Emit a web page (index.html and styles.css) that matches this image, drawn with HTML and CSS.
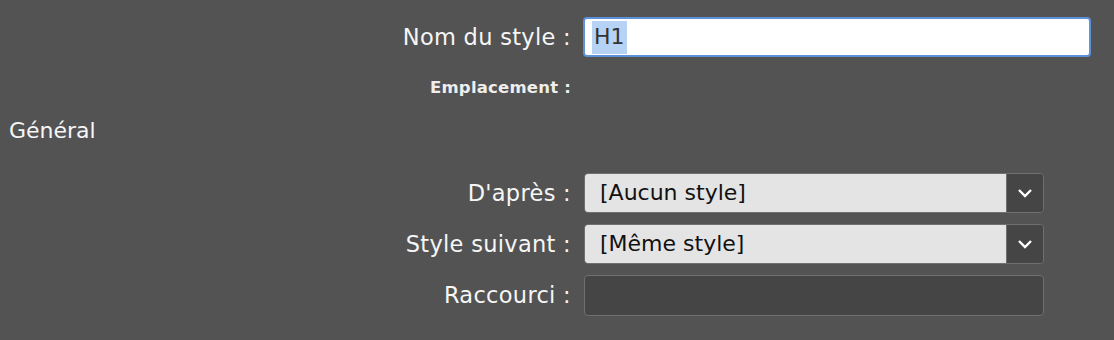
FILE: index.html
```html
<!doctype html>
<html lang="fr">
<head>
	<meta charset="UTF-8">
	<title>Options de style</title>
	<link rel="stylesheet" href="styles.css">
</head>
<body>
	<div class="panel">
		<div class="row row-name">
			<label class="label">Nom du style :</label>
			<div class="text-input focused"><span class="sel">H1</span></div>
		</div>
		<div class="row row-place">
			<span class="label small">Emplacement :</span>
		</div>
		<div class="section">Général</div>
		<div class="row row-select">
			<label class="label">D'après :</label>
			<div class="select">
				<span class="value">[Aucun style]</span>
				<span class="arrow">
					<svg width="16" height="10" viewBox="0 0 16 10"><polyline points="2,2 8,8 14,2" fill="none" stroke="#fff" stroke-width="2.4"/></svg>
				</span>
			</div>
		</div>
		<div class="row row-select">
			<label class="label">Style suivant :</label>
			<div class="select">
				<span class="value">[Même style]</span>
				<span class="arrow">
					<svg width="16" height="10" viewBox="0 0 16 10"><polyline points="2,2 8,8 14,2" fill="none" stroke="#fff" stroke-width="2.4"/></svg>
				</span>
			</div>
		</div>
		<div class="row row-select">
			<label class="label">Raccourci :</label>
			<div class="shortcut"></div>
		</div>
	</div>
</body>
</html>
```

FILE: styles.css
```css
html{
	height: 100%;
}
body{
	margin: 0;
	height: 100%;
	background: #535353;
	font-family: "DejaVu Sans", sans-serif;
	color: #f6f6f6;
	overflow: hidden;
}
.panel{
	padding-top: 17px;
}
.row{
	display: flex;
	align-items: center;
}
.label{
	width: 583px;
	padding-right: 12px;
	box-sizing: border-box;
	text-align: right;
	font-size: 22.5px;
	letter-spacing: 0.3px;
	flex: none;
	white-space: nowrap;
}
.label.small{
	font-size: 16.5px;
	font-weight: bold;
	letter-spacing: 0.2px;
	color: #eeeeee;
}
.row-name{
	height: 40px;
}
.text-input{
	width: 508px;
	height: 40px;
	box-sizing: border-box;
	background: #fff;
	border: 2px solid #5d92d9;
	border-radius: 4px;
	display: flex;
	align-items: center;
	padding-left: 7px;
	font-size: 22px;
	color: #333;
}
.sel{
	background: #b6d3f6;
	padding: 3px 2px 4px;
	line-height: 26px;
}
.row-place{
	height: 26px;
	margin-top: 17px;
}
.section{
	margin-top: 18px;
	padding-left: 9px;
	font-size: 22px;
	line-height: 26px;
}
.row-select{
	height: 40px;
	margin-top: 11px;
}
.section + .row-select{
	margin-top: 29px;
}
.select{
	width: 460px;
	height: 40px;
	box-sizing: border-box;
	margin-left: 1px;
	border: 1px solid #6f6f6f;
	border-radius: 4px;
	display: flex;
	overflow: hidden;
}
.value{
	flex: 1;
	background: #e4e4e4;
	color: #111;
	font-size: 22px;
	line-height: 38px;
	padding-left: 15px;
}
.arrow{
	width: 36px;
	background: #454545;
	border-left: 1px solid #6f6f6f;
	display: flex;
	align-items: center;
	justify-content: center;
}
.shortcut{
	width: 460px;
	height: 41px;
	box-sizing: border-box;
	margin-left: 1px;
	background: #454545;
	border: 1px solid #6f6f6f;
	border-radius: 4px;
}
```
